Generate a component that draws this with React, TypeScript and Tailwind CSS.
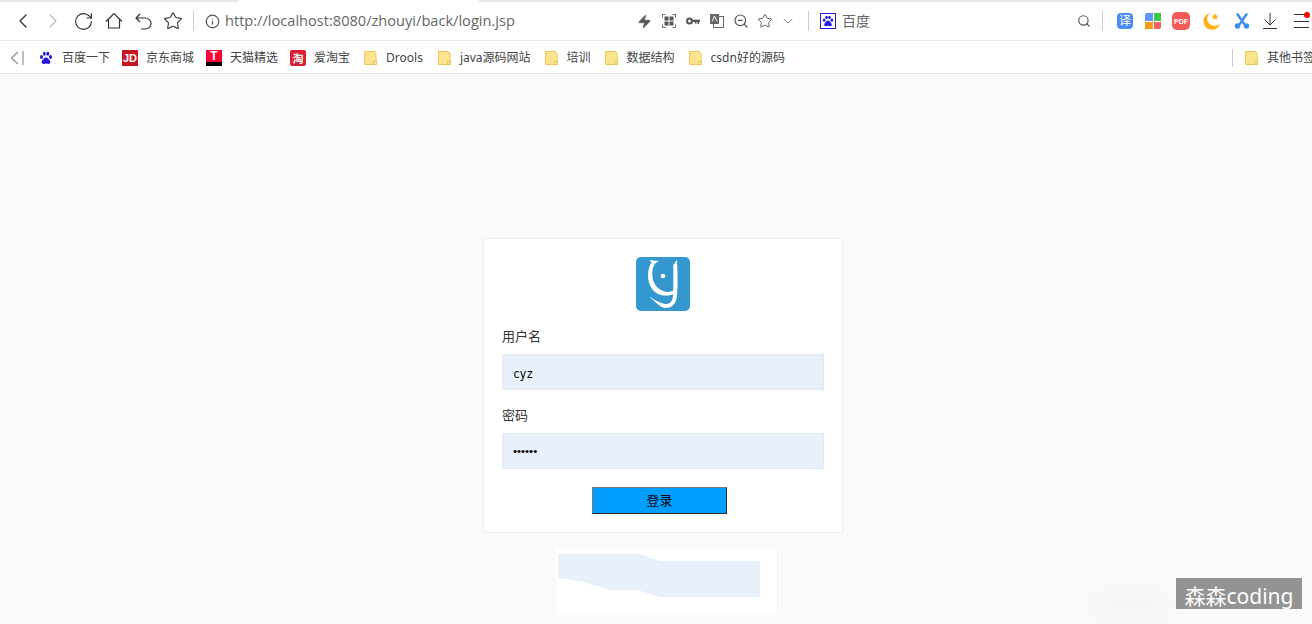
import { ReactNode } from "react";
import { ChevronDown, ChevronLeft, ChevronRight, Info, RotateCw, Search, Star, Zap, ZoomOut } from "lucide-react";

const cjk = "font-['Noto_Sans','Noto_Sans_CJK_SC',sans-serif]";

function Folder() {
  return (
    <svg width="13" height="14" viewBox="0 0 13 14" className="shrink-0">
      <path d="M.5.5h10l1.500 1.500v11.500h-11.500z" fill="#fde38e" stroke="#edc658" />
      <rect x="9.500" y="10.500" width="3" height="3" fill="#fde38e" stroke="#edc658" />
    </svg>
  );
}

function BaiduPaw({ size = 14, color = "#2319dc" }: { size?: number; color?: string }) {
  return (
    <svg width={size} height={size} viewBox="0 0 14 14" className="shrink-0">
      <g fill={color}>
        <ellipse cx="2.500" cy="6" rx="1.500" ry="2" />
        <ellipse cx="5.300" cy="2.800" rx="1.500" ry="2" />
        <ellipse cx="8.800" cy="2.800" rx="1.500" ry="2" />
        <ellipse cx="11.500" cy="6" rx="1.500" ry="2" />
        <path d="M7 6.500c2 0 2.500 1.800 3.800 3 1.200 1.200.7 3.500-1.300 3.500-1 0-1.500-.4-2.500-.4s-1.500.4-2.500.4c-2 0-2.500-2.300-1.300-3.500 1.300-1.200 1.800-3 3.800-3z" />
      </g>
    </svg>
  );
}

function Bookmark({ icon, label, gap, after }: { icon: ReactNode; label: string; gap: string; after: string }) {
  return (
    <div className={`flex shrink-0 items-center ${gap} ${after}`}>
      {icon}
      <span className={`whitespace-nowrap text-[12px] text-[#444] ${cjk}`}>{label}</span>
    </div>
  );
}

function Toolbar() {
  return (
    <div className="flex h-[39px] shrink-0 items-center border-b border-[#ececec] bg-white">
      <ChevronLeft size={24} strokeWidth={1.400} className="ml-[11px] text-[#333]" />
      <ChevronRight size={24} strokeWidth={1.200} className="ml-[6px] text-[#bbb]" />
      <RotateCw size={21} strokeWidth={1.300} className="ml-[8px] text-[#333]" />
      <svg width="18" height="18" viewBox="0 0 18 18" fill="none" stroke="#333" strokeWidth="1.200" className="ml-[11px]">
        <path d="M1 9.500L9 1.500l8 8M3.500 7.500v8.500h11V7.500" />
      </svg>
      <svg width="17" height="17" viewBox="0 0 17 17" fill="none" stroke="#333" strokeWidth="1.200" className="ml-[12px]">
        <path d="M5 1L1 5l4 4M1 5h9.500a5 5 0 0 1 0 11H6" />
      </svg>
      <Star size={20} strokeWidth={1.300} className="ml-[11px] text-[#333]" />
      <div className="ml-[10px] h-5 w-px bg-[#ccc]" />
      <Info size={15} strokeWidth={2} className="ml-[11px] text-[#555]" />
      <span className="ml-[5px] w-[412px] whitespace-nowrap font-['Open_Sans',sans-serif] text-[14.600px] text-[#666]">
        http://localhost:8080/zhouyi/back/login.jsp
      </span>
      <Zap size={15} fill="#555" strokeWidth={1} className="text-[#555]" />
      <svg width="14" height="14" viewBox="0 0 14 14" className="ml-[10px]" fill="none">
        <path d="M.5 3.500v-3h3M10.500.5h3v3M13.500 10.500v3h-3M3.500 13.500h-3v-3" stroke="#666" />
        <rect x="2.500" y="2.500" width="4" height="4" fill="#555" />
        <rect x="7.500" y="2.500" width="4" height="4" fill="#555" />
        <rect x="2.500" y="7.500" width="4" height="4" fill="#555" />
        <rect x="7.500" y="7.500" width="4" height="4" fill="#555" />
      </svg>
      <svg width="14" height="8" viewBox="0 0 14 8" className="ml-[10px]">
        <circle cx="3.500" cy="4" r="2.500" fill="none" stroke="#555" strokeWidth="2" />
        <path d="M6 2.800h8v2.200h-1v2h-1.500v-2h-1v1.500H9v-1.500H6z" fill="#555" />
      </svg>
      <svg width="14" height="14" viewBox="0 0 14 14" className="ml-[10px]">
        <rect x="3.500" y="2.500" width="10" height="11" fill="#fff" stroke="#666" />
        <rect x="0" y="0" width="9" height="10" fill="#666" />
        <path d="M2 7.500l2.500-5.500 2.500 5.500" fill="none" stroke="#fff" />
      </svg>
      <ZoomOut size={16} strokeWidth={1.800} className="ml-[9px] text-[#555]" />
      <Star size={16} strokeWidth={1.400} className="ml-[8px] text-[#555]" />
      <ChevronDown size={16} strokeWidth={1.200} className="ml-[7px] text-[#666]" />
      <div className="ml-[12px] h-5 w-px bg-[#ccc]" />
      <div className="ml-[11px] flex h-4 w-4 items-center justify-center border border-[#2319dc]">
        <BaiduPaw size={12} />
      </div>
      <span className={`ml-[6px] text-[14px] leading-none text-[#666] ${cjk}`}>百度</span>
      <Search size={14} strokeWidth={2} className="ml-[207px] text-[#555]" />
      <div className="ml-[11px] h-5 w-px bg-[#ccc]" />
      <div className={`ml-[14px] flex h-4 w-4 items-center justify-center rounded-[4px] bg-[#4a8af4] text-[12px] leading-none text-white ${cjk}`}>
        译
      </div>
      <div className="ml-[12px] grid h-4 w-4 grid-cols-2 gap-px">
        <div className="rounded-tl-[2px] bg-[#5f97f6]" />
        <div className="bg-[#3fc84e]" />
        <div className="bg-[#f59b16]" />
        <div className="rounded-br-[2px] bg-[#f65f5f]" />
      </div>
      <div className="ml-[11px] flex h-[18px] w-[18px] items-center justify-center rounded-[5px] bg-[#f55a5a] font-['Liberation_Sans',sans-serif] text-[7px] font-bold leading-none text-white">
        PDF
      </div>
      <svg width="19" height="19" viewBox="0 0 19 19" className="ml-[12px]">
        <path d="M8 1a8.500 8.500 0 1 0 10 11 7.500 7.500 0 0 1-7 1.500A7 7 0 0 1 8 1z" fill="#fbb116" />
        <path d="M13 1l1 2.500 2.500.2-1.900 1.600.6 2.500-2.200-1.400-2.200 1.400.6-2.500-1.900-1.600 2.500-.2z" fill="#fbb116" />
      </svg>
      <svg width="16" height="17" viewBox="0 0 16 17" className="ml-[13px]">
        <path d="M3 .5l7.500 11M13 .5L5.500 11.500" fill="none" stroke="#3a8ef0" strokeWidth="2.400" />
        <circle cx="3.500" cy="13" r="2.700" fill="#3a8ef0" />
        <circle cx="12.500" cy="13" r="2.700" fill="#3a8ef0" />
      </svg>
      <svg width="14" height="16" viewBox="0 0 14 16" fill="none" stroke="#333" className="ml-[13px]">
        <path d="M7 0v12M1.500 6.500L7 12l5.500-5.500M0 15.500h14" />
      </svg>
      <div className="relative ml-[17px] flex h-[14px] w-[15px] flex-col justify-between">
        <div className="h-px bg-[#333]" />
        <div className="h-px bg-[#333]" />
        <div className="h-px bg-[#333]" />
        <div className="absolute -right-[0.5px] -top-[2px] h-1.5 w-1.5 rounded-full bg-[#f00]" />
      </div>
    </div>
  );
}

function BookmarkBar() {
  return (
    <div className="flex h-[33px] shrink-0 items-center overflow-hidden border-b border-[#e6e6e6] bg-white pt-[2px]">
      <svg width="14" height="14" viewBox="0 0 14 14" fill="none" stroke="#888" strokeWidth="1.100" className="ml-[10px] mr-[15px] shrink-0">
        <path d="M8 1L1.500 7 8 13M13 0v14" />
      </svg>
      <Bookmark icon={<BaiduPaw />} label="百度一下" gap="gap-[9px]" after="mr-[12px]" />
      <Bookmark
        icon={
          <div className="flex h-4 w-4 shrink-0 items-center justify-center bg-[#c9151e] font-['Liberation_Sans',sans-serif] text-[11px] font-bold leading-none text-white">
            JD
          </div>
        }
        label="京东商城"
        gap="gap-[8px]"
        after="mr-[12px]"
      />
      <Bookmark
        icon={
          <div className="flex h-4 w-4 shrink-0 flex-col">
            <div className="flex h-3 items-center justify-center bg-[#ff0036] font-['Liberation_Sans',sans-serif] text-[12px] font-bold leading-none text-white">
              T
            </div>
            <div className="h-1 bg-black" />
          </div>
        }
        label="天猫精选"
        gap="gap-[8px]"
        after="mr-[12px]"
      />
      <Bookmark
        icon={
          <div className={`flex h-4 w-4 shrink-0 items-center justify-center rounded-[2px] bg-[#dc1e32] text-[11px] font-bold leading-none text-white ${cjk}`}>
            淘
          </div>
        }
        label="爱淘宝"
        gap="gap-[8px]"
        after="mr-[14px]"
      />
      <Bookmark icon={<Folder />} label="Drools" gap="gap-[9px]" after="mr-[15px]" />
      <Bookmark icon={<Folder />} label="java源码网站" gap="gap-[9px]" after="mr-[14px]" />
      <Bookmark icon={<Folder />} label="培训" gap="gap-[9px]" after="mr-[14px]" />
      <Bookmark icon={<Folder />} label="数据结构" gap="gap-[9px]" after="mr-[14px]" />
      <Bookmark icon={<Folder />} label="csdn好的源码" gap="gap-[9px]" after="mr-[447px]" />
      <div className="mr-[12px] h-[18px] w-px shrink-0 bg-[#ccc]" />
      <Bookmark icon={<Folder />} label="其他书签" gap="gap-[9px]" after="" />
    </div>
  );
}

function Logo() {
  return (
    <svg width="54" height="54" viewBox="0 0 54 54" className="mx-auto block">
      <rect width="54" height="54" rx="5" fill="#3498cf" />
      <g fill="#fff">
        <path d="M13 3L23 4C18 6 16 11 16.300 18C16.500 26 22 34 31 35C34 35 36 34.500 38 33L38 37C35 38.500 30 39 25 38C17 36 12 28 12 18C12 12 14 8 15.500 5Z" />
        <path d="M41 3C41.500 15 42 30 41 39C40 47 36 51 30 51C26 51 24 49.500 13 39.500C19 43 25 47 30 47C35 47 37 43 37.300 36L37.300 8Z" />
        <circle cx="27" cy="19" r="2.300" />
      </g>
    </svg>
  );
}

function Field({ label, type, value, font }: { label: string; type: string; value: string; font: string }) {
  return (
    <div className="mt-[16px]">
      <label className={`block text-[13px] leading-[18px] text-[#333] ${cjk}`}>{label}</label>
      <input
        type={type}
        defaultValue={value}
        readOnly
        className={`mt-[9px] block h-9 w-[322px] border border-[#e3e8f0] bg-[#e8f0fb] px-[10px] text-black outline-none ${font}`}
      />
    </div>
  );
}

function LoginCard() {
  return (
    <div className="h-[295px] w-[360px] shrink-0 border border-[#ededed] bg-white px-[18px] pt-[18px]">
      <Logo />
      <Field label="用户名" type="text" value="cyz" font="pt-[3px] font-['DejaVu_Sans_Mono',monospace] text-[11.500px] tracking-[-0.3px]" />
      <Field label="密码" type="password" value="123456" font="font-['Liberation_Sans',sans-serif] text-[11.500px]" />
      <button className={`ml-[90px] mt-[18px] block h-[27px] w-[135px] border border-[#767676] border-b-[#222] border-r-[#222] bg-[#009fff] text-[13px] leading-none text-black ${cjk}`}>
        登录
      </button>
    </div>
  );
}

// the smeared-out patch under the card
function SmearedPatch() {
  return (
    <div className="mt-[16px] h-[66px] w-[222px] shrink-0 translate-x-[4px] border-r border-[#f0f0f0] bg-white">
      <svg width="222" height="66" viewBox="0 0 222 66" className="block">
        <path d="M2 5H84L104 12H204V48H104L81 41H54L27 33 2 29z" fill="#e8f0fb" />
      </svg>
    </div>
  );
}

export default function App() {
  return (
    <div className="relative flex h-[624px] w-[1312px] flex-col overflow-hidden bg-[#fafafa]">
      <div className="flex h-[2px] shrink-0 bg-[#e8e8e8]">
        <div className="ml-[239px] w-[240px] bg-white" />
      </div>
      <Toolbar />
      <BookmarkBar />
      <main className="flex flex-1 flex-col items-center pl-[14px] pt-[164px]">
        <LoginCard />
        <SmearedPatch />
      </main>
      <div className="absolute bottom-[12px] left-[1090px] h-[14px] w-[80px] rounded-full bg-[#f0f0f0] blur-md" />
      <div className={`absolute bottom-[15px] right-[10px] flex h-[31px] w-[126px] items-center justify-center overflow-hidden bg-[#939393] pt-[7px] text-[21px] text-white ${cjk}`}>
        森森coding
      </div>
    </div>
  );
}
